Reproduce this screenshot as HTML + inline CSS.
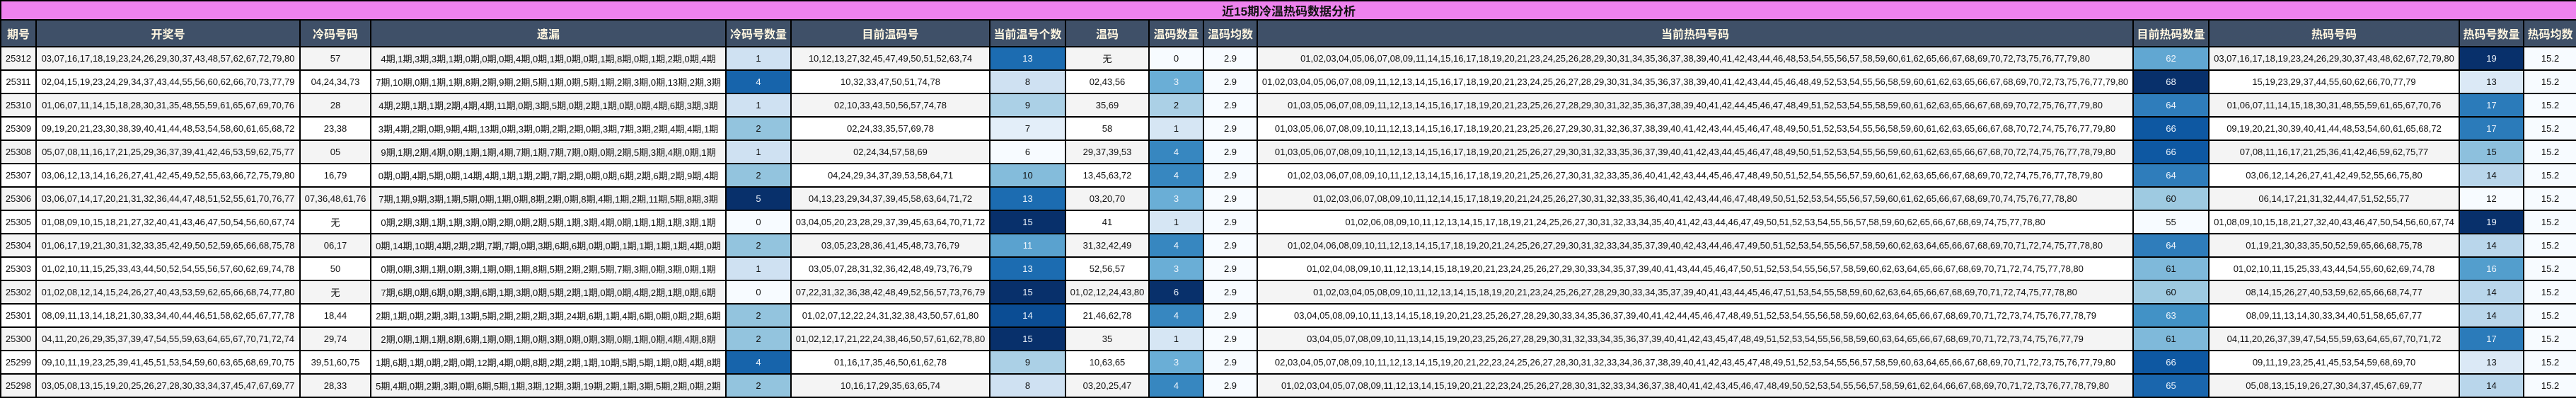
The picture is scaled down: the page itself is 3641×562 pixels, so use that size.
<!DOCTYPE html>
<html><head><meta charset="utf-8">
<style>
html,body{margin:0;padding:0;background:#fff;}
body{width:3641px;height:559px;overflow:hidden;}
table{border-collapse:collapse;table-layout:fixed;width:3641px;font-family:"Liberation Sans","Noto Sans CJK SC",sans-serif;font-size:13px;color:#111;}
td,th{border:2px solid #000;text-align:center;white-space:nowrap;overflow:hidden;padding:0;}
.t td{background:#ee82ee;height:22px;font-weight:bold;font-size:17px;font-family:"Liberation Sans","Noto Sans CJK SC",sans-serif;}
.h th{background:#3f5068;color:#fff6e0;height:36px;font-size:16px;font-weight:bold;font-family:"Noto Sans CJK SC",sans-serif;}
tbody tr td{height:31px;}
tr.o td{background:#f4f4f4;}
tr.e td{background:#fff;}
td.w{color:#eef4fb;}
tr td.n{background:#f7fbff;}
</style></head><body>
<table>
<colgroup><col style="width:50px"><col style="width:373px"><col style="width:100px"><col style="width:502px"><col style="width:92px"><col style="width:281px"><col style="width:107px"><col style="width:118px"><col style="width:77px"><col style="width:76px"><col style="width:1238px"><col style="width:107px"><col style="width:354px"><col style="width:91px"><col style="width:75px"></colgroup>
<thead>
<tr class="t"><td colspan="15">近15期冷温热码数据分析</td></tr>
<tr class="h"><th>期号</th><th>开奖号</th><th>冷码号码</th><th>遗漏</th><th>冷码号数量</th><th>目前温码号</th><th>当前温号个数</th><th>温码</th><th>温码数量</th><th>温码均数</th><th>当前热码号码</th><th>目前热码数量</th><th>热码号码</th><th>热码号数量</th><th>热码均数</th></tr>
</thead>
<tbody>
<tr class="o"><td>25312</td><td>03,07,16,17,18,19,23,24,26,29,30,37,43,48,57,62,67,72,79,80</td><td>57</td><td>4期,1期,3期,3期,1期,0期,0期,0期,4期,0期,1期,0期,0期,1期,8期,0期,1期,2期,0期,4期</td><td style="background:#cfe1f2">1</td><td>10,12,13,27,32,45,47,49,50,51,52,63,74</td><td class="w" style="background:#1c6cb1">13</td><td>无</td><td style="background:#f7fbff">0</td><td class="n">2.9</td><td>01,02,03,04,05,06,07,08,09,11,14,15,16,17,18,19,20,21,23,24,25,26,28,29,30,31,34,35,36,37,38,39,40,41,42,43,44,46,48,53,54,55,56,57,58,59,60,61,62,65,66,67,68,69,70,72,73,75,76,77,79,80</td><td class="w" style="background:#61a7d2">62</td><td>03,07,16,17,18,19,23,24,26,29,30,37,43,48,62,67,72,79,80</td><td class="w" style="background:#08306b">19</td><td class="n">15.2</td></tr>
<tr class="e"><td>25311</td><td>02,04,15,19,23,24,29,34,37,43,44,55,56,60,62,66,70,73,77,79</td><td>04,24,34,73</td><td>7期,10期,0期,1期,1期,8期,2期,9期,2期,5期,1期,0期,5期,1期,2期,3期,0期,13期,2期,3期</td><td class="w" style="background:#1764ab">4</td><td>10,32,33,47,50,51,74,78</td><td style="background:#cfe1f2">8</td><td>02,43,56</td><td class="w" style="background:#6aaed6">3</td><td class="n">2.9</td><td>01,02,03,04,05,06,07,08,09,11,12,13,14,15,16,17,18,19,20,21,23,24,25,26,27,28,29,30,31,34,35,36,37,38,39,40,41,42,43,44,45,46,48,49,52,53,54,55,56,58,59,60,61,62,63,65,66,67,68,69,70,72,73,75,76,77,79,80</td><td class="w" style="background:#08306b">68</td><td>15,19,23,29,37,44,55,60,62,66,70,77,79</td><td style="background:#dbe9f6">13</td><td class="n">15.2</td></tr>
<tr class="o"><td>25310</td><td>01,06,07,11,14,15,18,28,30,31,35,48,55,59,61,65,67,69,70,76</td><td>28</td><td>4期,2期,1期,1期,2期,4期,4期,11期,0期,3期,5期,0期,2期,1期,0期,0期,4期,6期,3期,3期</td><td style="background:#cfe1f2">1</td><td>02,10,33,43,50,56,57,74,78</td><td style="background:#abd0e6">9</td><td>35,69</td><td style="background:#abd0e6">2</td><td class="n">2.9</td><td>01,03,05,06,07,08,09,11,12,13,14,15,16,17,18,19,20,21,23,25,26,27,28,29,30,31,32,35,36,37,38,39,40,41,42,44,45,46,47,48,49,51,52,53,54,55,58,59,60,61,62,63,65,66,67,68,69,70,72,75,76,77,79,80</td><td class="w" style="background:#2f7dbb">64</td><td>01,06,07,11,14,15,18,30,31,48,55,59,61,65,67,70,76</td><td class="w" style="background:#2b7bba">17</td><td class="n">15.2</td></tr>
<tr class="e"><td>25309</td><td>09,19,20,21,23,30,38,39,40,41,44,48,53,54,58,60,61,65,68,72</td><td>23,38</td><td>3期,4期,2期,0期,9期,4期,13期,0期,3期,0期,2期,2期,0期,3期,7期,3期,2期,4期,4期,1期</td><td style="background:#93c4de">2</td><td>02,24,33,35,57,69,78</td><td style="background:#e3eef9">7</td><td>58</td><td style="background:#d6e6f4">1</td><td class="n">2.9</td><td>01,03,05,06,07,08,09,10,11,12,13,14,15,16,17,18,19,20,21,23,25,26,27,29,30,31,32,36,37,38,39,40,41,42,43,44,45,46,47,48,49,50,51,52,53,54,55,56,58,59,60,61,62,63,65,66,67,68,70,72,74,75,76,77,79,80</td><td class="w" style="background:#0e58a2">66</td><td>09,19,20,21,30,39,40,41,44,48,53,54,60,61,65,68,72</td><td class="w" style="background:#2b7bba">17</td><td class="n">15.2</td></tr>
<tr class="o"><td>25308</td><td>05,07,08,11,16,17,21,25,29,36,37,39,41,42,46,53,59,62,75,77</td><td>05</td><td>9期,1期,2期,4期,0期,1期,1期,4期,7期,1期,7期,7期,0期,0期,2期,5期,3期,4期,0期,1期</td><td style="background:#cfe1f2">1</td><td>02,24,34,57,58,69</td><td style="background:#f7fbff">6</td><td>29,37,39,53</td><td class="w" style="background:#3787c0">4</td><td class="n">2.9</td><td>01,03,05,06,07,08,09,10,11,12,13,14,15,16,17,18,19,20,21,25,26,27,29,30,31,32,33,35,36,37,39,40,41,42,43,44,45,46,47,48,49,50,51,52,53,54,55,56,59,60,61,62,63,65,66,67,68,70,72,74,75,76,77,78,79,80</td><td class="w" style="background:#0e58a2">66</td><td>07,08,11,16,17,21,25,36,41,42,46,59,62,75,77</td><td style="background:#8dc0dd">15</td><td class="n">15.2</td></tr>
<tr class="e"><td>25307</td><td>03,06,12,13,14,16,26,27,41,42,45,49,52,55,63,66,72,75,79,80</td><td>16,79</td><td>0期,0期,4期,5期,0期,14期,4期,1期,1期,2期,7期,2期,0期,0期,6期,2期,6期,2期,9期,4期</td><td style="background:#93c4de">2</td><td>04,24,29,34,37,39,53,58,64,71</td><td style="background:#84bcdb">10</td><td>13,45,63,72</td><td class="w" style="background:#3787c0">4</td><td class="n">2.9</td><td>01,02,03,06,07,08,09,10,11,12,13,14,15,16,17,18,19,20,21,25,26,27,30,31,32,33,35,36,40,41,42,43,44,45,46,47,48,49,50,51,52,54,55,56,57,59,60,61,62,63,65,66,67,68,69,70,72,74,75,76,77,78,79,80</td><td class="w" style="background:#2f7dbb">64</td><td>03,06,12,14,26,27,41,42,49,52,55,66,75,80</td><td style="background:#b9d6eb">14</td><td class="n">15.2</td></tr>
<tr class="o"><td>25306</td><td>03,06,07,14,17,20,21,31,32,36,44,47,48,51,52,55,61,70,76,77</td><td>07,36,48,61,76</td><td>7期,1期,9期,3期,1期,5期,0期,1期,0期,8期,2期,0期,8期,4期,1期,2期,11期,5期,8期,3期</td><td class="w" style="background:#08306b">5</td><td>04,13,23,29,34,37,39,45,58,63,64,71,72</td><td class="w" style="background:#1c6cb1">13</td><td>03,20,70</td><td class="w" style="background:#6aaed6">3</td><td class="n">2.9</td><td>01,02,03,06,07,08,09,10,11,12,14,15,17,18,19,20,21,24,25,26,27,30,31,32,33,35,36,40,41,42,43,44,46,47,48,49,50,51,52,53,54,55,56,57,59,60,61,62,65,66,67,68,69,70,74,75,76,77,78,80</td><td style="background:#9ecae1">60</td><td>06,14,17,21,31,32,44,47,51,52,55,77</td><td style="background:#f7fbff">12</td><td class="n">15.2</td></tr>
<tr class="e"><td>25305</td><td>01,08,09,10,15,18,21,27,32,40,41,43,46,47,50,54,56,60,67,74</td><td>无</td><td>0期,2期,3期,1期,1期,3期,0期,2期,0期,2期,5期,1期,3期,4期,0期,1期,1期,1期,3期,1期</td><td style="background:#f7fbff">0</td><td>03,04,05,20,23,28,29,37,39,45,63,64,70,71,72</td><td class="w" style="background:#08306b">15</td><td>41</td><td style="background:#d6e6f4">1</td><td class="n">2.9</td><td>01,02,06,08,09,10,11,12,13,14,15,17,18,19,21,24,25,26,27,30,31,32,33,34,35,40,41,42,43,44,46,47,49,50,51,52,53,54,55,56,57,58,59,60,62,65,66,67,68,69,74,75,77,78,80</td><td style="background:#f7fbff">55</td><td>01,08,09,10,15,18,21,27,32,40,43,46,47,50,54,56,60,67,74</td><td class="w" style="background:#08306b">19</td><td class="n">15.2</td></tr>
<tr class="o"><td>25304</td><td>01,06,17,19,21,30,31,32,33,35,42,49,50,52,59,65,66,68,75,78</td><td>06,17</td><td>0期,14期,10期,4期,2期,2期,7期,7期,0期,3期,6期,6期,0期,0期,1期,1期,1期,1期,4期,0期</td><td style="background:#93c4de">2</td><td>03,05,23,28,36,41,45,48,73,76,79</td><td class="w" style="background:#5aa2cf">11</td><td>31,32,42,49</td><td class="w" style="background:#3787c0">4</td><td class="n">2.9</td><td>01,02,04,06,08,09,10,11,12,13,14,15,17,18,19,20,21,24,25,26,27,29,30,31,32,33,34,35,37,39,40,42,43,44,46,47,49,50,51,52,53,54,55,56,57,58,59,60,62,63,64,65,66,67,68,69,70,71,72,74,75,77,78,80</td><td class="w" style="background:#2f7dbb">64</td><td>01,19,21,30,33,35,50,52,59,65,66,68,75,78</td><td style="background:#b9d6eb">14</td><td class="n">15.2</td></tr>
<tr class="e"><td>25303</td><td>01,02,10,11,15,25,33,43,44,50,52,54,55,56,57,60,62,69,74,78</td><td>50</td><td>0期,0期,3期,1期,0期,3期,1期,0期,1期,8期,5期,2期,2期,5期,7期,3期,0期,3期,0期,1期</td><td style="background:#cfe1f2">1</td><td>03,05,07,28,31,32,36,42,48,49,73,76,79</td><td class="w" style="background:#1c6cb1">13</td><td>52,56,57</td><td class="w" style="background:#6aaed6">3</td><td class="n">2.9</td><td>01,02,04,08,09,10,11,12,13,14,15,18,19,20,21,23,24,25,26,27,29,30,33,34,35,37,39,40,41,43,44,45,46,47,50,51,52,53,54,55,56,57,58,59,60,62,63,64,65,66,67,68,69,70,71,72,74,75,77,78,80</td><td style="background:#7fb9da">61</td><td>01,02,10,11,15,25,33,43,44,54,55,60,62,69,74,78</td><td class="w" style="background:#539ecd">16</td><td class="n">15.2</td></tr>
<tr class="o"><td>25302</td><td>01,02,08,12,14,15,24,26,27,40,43,53,59,62,65,66,68,74,77,80</td><td>无</td><td>7期,6期,0期,6期,0期,3期,6期,1期,3期,0期,5期,2期,1期,0期,0期,4期,2期,1期,0期,6期</td><td style="background:#f7fbff">0</td><td>07,22,31,32,36,38,42,48,49,52,56,57,73,76,79</td><td class="w" style="background:#08306b">15</td><td>01,02,12,24,43,80</td><td class="w" style="background:#08306b">6</td><td class="n">2.9</td><td>01,02,03,04,05,08,09,10,11,12,13,14,15,18,19,20,21,23,24,25,26,27,28,29,30,33,34,35,37,39,40,41,43,44,45,46,47,51,53,54,55,58,59,60,62,63,64,65,66,67,68,69,70,71,72,74,75,77,78,80</td><td style="background:#9ecae1">60</td><td>08,14,15,26,27,40,53,59,62,65,66,68,74,77</td><td style="background:#b9d6eb">14</td><td class="n">15.2</td></tr>
<tr class="e"><td>25301</td><td>08,09,11,13,14,18,21,30,33,34,40,44,46,51,58,62,65,67,77,78</td><td>18,44</td><td>2期,1期,0期,2期,3期,13期,5期,2期,2期,2期,3期,24期,6期,1期,4期,6期,0期,0期,2期,6期</td><td style="background:#93c4de">2</td><td>01,02,07,12,22,24,31,32,38,43,50,57,61,80</td><td class="w" style="background:#0b4d94">14</td><td>21,46,62,78</td><td class="w" style="background:#3787c0">4</td><td class="n">2.9</td><td>03,04,05,08,09,10,11,13,14,15,18,19,20,21,23,25,26,27,28,29,30,33,34,35,36,37,39,40,41,42,44,45,46,47,48,49,51,52,53,54,55,56,58,59,60,62,63,64,65,66,67,68,69,70,71,72,73,74,75,76,77,78,79</td><td class="w" style="background:#4292c6">63</td><td>08,09,11,13,14,30,33,34,40,51,58,65,67,77</td><td style="background:#b9d6eb">14</td><td class="n">15.2</td></tr>
<tr class="o"><td>25300</td><td>04,11,20,26,29,35,37,39,47,54,55,59,63,64,65,67,70,71,72,74</td><td>29,74</td><td>2期,0期,1期,1期,8期,6期,1期,0期,1期,0期,3期,0期,0期,3期,0期,1期,0期,4期,4期,8期</td><td style="background:#93c4de">2</td><td>01,02,12,17,21,22,24,38,46,50,57,61,62,78,80</td><td class="w" style="background:#08306b">15</td><td>35</td><td style="background:#d6e6f4">1</td><td class="n">2.9</td><td>03,04,05,07,08,09,10,11,13,14,15,19,20,23,25,26,27,28,29,30,31,32,33,34,35,36,37,39,40,41,42,43,45,47,48,49,51,52,53,54,55,56,58,59,60,63,64,65,66,67,68,69,70,71,72,73,74,75,76,77,79</td><td style="background:#7fb9da">61</td><td>04,11,20,26,37,39,47,54,55,59,63,64,65,67,70,71,72</td><td class="w" style="background:#2b7bba">17</td><td class="n">15.2</td></tr>
<tr class="e"><td>25299</td><td>09,10,11,19,23,25,39,41,45,51,53,54,59,60,63,65,68,69,70,75</td><td>39,51,60,75</td><td>1期,6期,1期,0期,2期,0期,12期,4期,0期,8期,2期,2期,1期,10期,5期,5期,1期,0期,4期,8期</td><td class="w" style="background:#1764ab">4</td><td>01,16,17,35,46,50,61,62,78</td><td style="background:#abd0e6">9</td><td>10,63,65</td><td class="w" style="background:#6aaed6">3</td><td class="n">2.9</td><td>02,03,04,05,07,08,09,10,11,12,13,14,15,19,20,21,22,23,24,25,26,27,28,30,31,32,33,34,36,37,38,39,40,41,42,43,45,47,48,49,51,52,53,54,55,56,57,58,59,60,63,64,65,66,67,68,69,70,71,72,73,75,76,77,79,80</td><td class="w" style="background:#0e58a2">66</td><td>09,11,19,23,25,41,45,53,54,59,68,69,70</td><td style="background:#dbe9f6">13</td><td class="n">15.2</td></tr>
<tr class="o"><td>25298</td><td>03,05,08,13,15,19,20,25,26,27,28,30,33,34,37,45,47,67,69,77</td><td>28,33</td><td>5期,4期,0期,2期,3期,0期,6期,5期,1期,3期,12期,3期,19期,2期,1期,3期,5期,2期,0期,2期</td><td style="background:#93c4de">2</td><td>10,16,17,29,35,63,65,74</td><td style="background:#cfe1f2">8</td><td>03,20,25,47</td><td class="w" style="background:#3787c0">4</td><td class="n">2.9</td><td>01,02,03,04,05,07,08,09,11,12,13,14,15,19,20,21,22,23,24,25,26,27,28,30,31,32,33,34,36,37,38,40,41,42,43,45,46,47,48,49,50,52,53,54,55,56,57,58,59,61,62,64,66,67,68,69,70,71,72,73,76,77,78,79,80</td><td class="w" style="background:#1a66ad">65</td><td>05,08,13,15,19,26,27,30,34,37,45,67,69,77</td><td style="background:#b9d6eb">14</td><td class="n">15.2</td></tr>
</tbody>
</table>
</body></html>
